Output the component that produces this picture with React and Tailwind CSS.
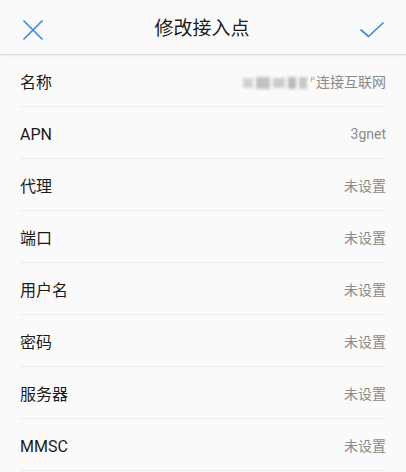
import React from "react";

const rows = [
    { label: "名称", value: "连接互联网", blurred: true },
    { label: "APN", value: "3gnet" },
    { label: "代理", value: "未设置" },
    { label: "端口", value: "未设置" },
    { label: "用户名", value: "未设置" },
    { label: "密码", value: "未设置" },
    { label: "服务器", value: "未设置" },
    { label: "MMSC", value: "未设置" },
];

const App = () => {
    return (
        <div
            className="w-[406px] h-[472px] overflow-hidden bg-[#fafafa] text-[#1a1a1a]"
            style={{ fontFamily: 'Roboto, "Noto Sans CJK SC", sans-serif' }}
        >
            <div className="flex items-center justify-between h-[55px] pt-[5px] px-[22px] bg-[#fafafa] border-b border-[#dcdcdc] shadow-[0_1px_2px_rgba(0,0,0,0.06)]">
                <svg width="22" height="22" viewBox="0 0 22 22" fill="none" stroke="#3b8de4" strokeWidth="1.7" strokeLinecap="round">
                    <path d="M2 2 L20 20 M20 2 L2 20" />
                </svg>
                <span className="text-[19px] text-[#1a1a1a]">修改接入点</span>
                <svg width="24" height="16" viewBox="0 0 24 16" fill="none" stroke="#3b8de4" strokeWidth="1.7" strokeLinecap="round" strokeLinejoin="round">
                    <path d="M1 8 L8.5 14.5 L23 1" />
                </svg>
            </div>
            <div className="px-5">
                {rows.map((row) => (
                    <div key={row.label} className="flex items-center justify-between h-[52px] pt-[4px] border-b border-[#ececec]">
                        <span className="text-[16px]">{row.label}</span>
                        {row.blurred ? (
                            <span className="flex items-center text-[14px] text-[#8a8a8a]">
                                <span className="flex items-center gap-[3px] mr-[4px] blur-[1.5px]">
                                    <span className="w-[10px] h-[10px] bg-[#d2d2d2]" />
                                    <span className="w-[14px] h-[12px] bg-[#c2c2c2]" />
                                    <span className="w-[12px] h-[10px] bg-[#cccccc]" />
                                    <span className="w-[8px] h-[12px] bg-[#bababa]" />
                                    <span className="w-[8px] h-[12px] bg-[#c8c8c8]" />
                                </span>
                                <span className="text-[#9a9a9a] text-[10px] -mt-[4px] mr-[1px]">ᴾ</span>
                                {row.value}
                            </span>
                        ) : (
                            <span className="text-[14px] text-[#8a8a8a]">{row.value}</span>
                        )}
                    </div>
                ))}
            </div>
        </div>
    );
};

export default App;
